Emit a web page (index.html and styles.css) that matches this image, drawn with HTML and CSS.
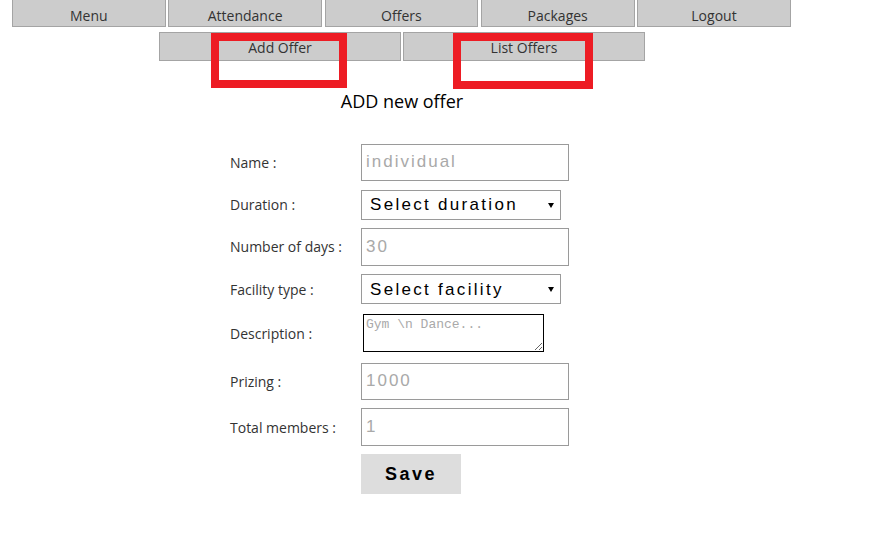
FILE: index.html
```html
<!DOCTYPE html>
<html>
<head>
<meta charset="utf-8">
<link rel="stylesheet" href="styles.css">
</head>
<body>
<div class="page">
  <nav class="nav">
    <a class="nav-btn">Menu</a>
    <a class="nav-btn">Attendance</a>
    <a class="nav-btn">Offers</a>
    <a class="nav-btn">Packages</a>
    <a class="nav-btn">Logout</a>
  </nav>
  <nav class="subnav">
    <a class="sub-btn">Add Offer</a>
    <a class="sub-btn">List Offers</a>
  </nav>
  <h1 class="title">ADD new offer</h1>
  <form class="form">
    <label class="lbl">Name :</label>
    <div class="cell"><input class="inp" type="text" placeholder="individual"></div>
    <label class="lbl">Duration :</label>
    <div class="cell"><span class="sel-wrap"><select class="sel"><option>Select duration</option></select></span></div>
    <label class="lbl">Number of days :</label>
    <div class="cell"><input class="inp" type="text" placeholder="30"></div>
    <label class="lbl">Facility type :</label>
    <div class="cell"><span class="sel-wrap"><select class="sel"><option>Select facility</option></select></span></div>
    <label class="lbl">Description :</label>
    <div class="cell"><textarea class="ta" placeholder="Gym \n Dance..."></textarea></div>
    <label class="lbl">Prizing :</label>
    <div class="cell"><input class="inp" type="text" placeholder="1000"></div>
    <label class="lbl">Total members :</label>
    <div class="cell"><input class="inp" type="text" placeholder="1"></div>
    <span class="lbl"></span>
    <div class="cell"><button class="save" type="button">Save</button></div>
  </form>
  <div class="mark mark-1"></div>
  <div class="mark mark-2"></div>
</div>
</body>
</html>
```
FILE: styles.css
```css
html, body {
  margin: 0;
  padding: 0;
  background: #fff;
}
.page {
  position: relative;
  width: 871px;
  height: 539px;
  overflow: hidden;
  font-family: "Open Sans", "Noto Sans", sans-serif;
}
.nav {
  display: flex;
  gap: 2.6px;
  margin: -1px 0 0 12px;
}
.nav-btn, .sub-btn {
  box-sizing: border-box;
  height: 28.3px;
  background: #cccccc;
  border: 1px solid #a4a4a4;
  color: #333;
  font-size: 14px;
  text-align: center;
  line-height: 31px;
  overflow: hidden;
}
.nav-btn {
  width: 153.7px;
}
.subnav {
  display: flex;
  gap: 2.6px;
  margin: 4.7px 0 0 159.3px;
}
.sub-btn {
  width: 241.4px;
  height: 28.7px;
  line-height: 30px;
}
.title {
  width: 804px;
  margin: 28px 0 0 0;
  text-align: center;
  font-size: 18px;
  font-weight: 400;
  color: #000;
  line-height: 24px;
}
.form {
  display: grid;
  grid-template-columns: 131px auto;
  row-gap: 8.6px;
  align-items: center;
  margin: 31px 0 0 230px;
}
.lbl {
  font-size: 14px;
  color: #333;
}
.cell {
  display: flex;
}
.inp {
  box-sizing: border-box;
  width: 208px;
  height: 37.4px;
  border: 1px solid #9a9a9a;
  padding: 0 4px;
  margin: 0;
  font-family: "Liberation Sans", Arial, sans-serif;
  font-size: 17px;
  letter-spacing: 2px;
  outline: none;
}
.inp::placeholder {
  color: #a9a9a9;
}
.sel-wrap {
  position: relative;
  display: inline-block;
}
.sel-wrap::after {
  content: "";
  position: absolute;
  right: 7px;
  top: 13px;
  border-left: 3px solid transparent;
  border-right: 3px solid transparent;
  border-top: 5px solid #000;
  pointer-events: none;
}
.sel {
  appearance: none;
  -webkit-appearance: none;
  box-sizing: border-box;
  width: 200px;
  height: 30px;
  border: 1px solid #9a9a9a;
  border-radius: 0;
  background: #fff;
  padding: 0 0 0 8px;
  margin: 0;
  font-family: "Liberation Sans", Arial, sans-serif;
  font-size: 17px;
  letter-spacing: 2.3px;
  color: #000;
}
.ta {
  box-sizing: border-box;
  width: 181px;
  height: 38px;
  margin: 1.4px 0 1.7px 2px;
  border: 1px solid #000;
  padding: 2px;
  font-family: "Liberation Mono", "Courier New", monospace;
  font-size: 13px;
  resize: both;
  outline: none;
}
.ta::placeholder {
  color: #a9a9a9;
}
.save {
  width: 100px;
  height: 40px;
  border: none;
  background: #dddddd;
  font-family: "Liberation Sans", Arial, sans-serif;
  font-weight: bold;
  font-size: 18px;
  letter-spacing: 2.5px;
  color: #000;
  padding: 0;
}
.mark {
  position: absolute;
  box-sizing: border-box;
  border: 8px solid #ed1c24;
}
.mark-1 {
  left: 211px;
  top: 32.7px;
  width: 135.7px;
  height: 55.3px;
}
.mark-2 {
  left: 453.3px;
  top: 32.7px;
  width: 139.4px;
  height: 56.6px;
}
```
